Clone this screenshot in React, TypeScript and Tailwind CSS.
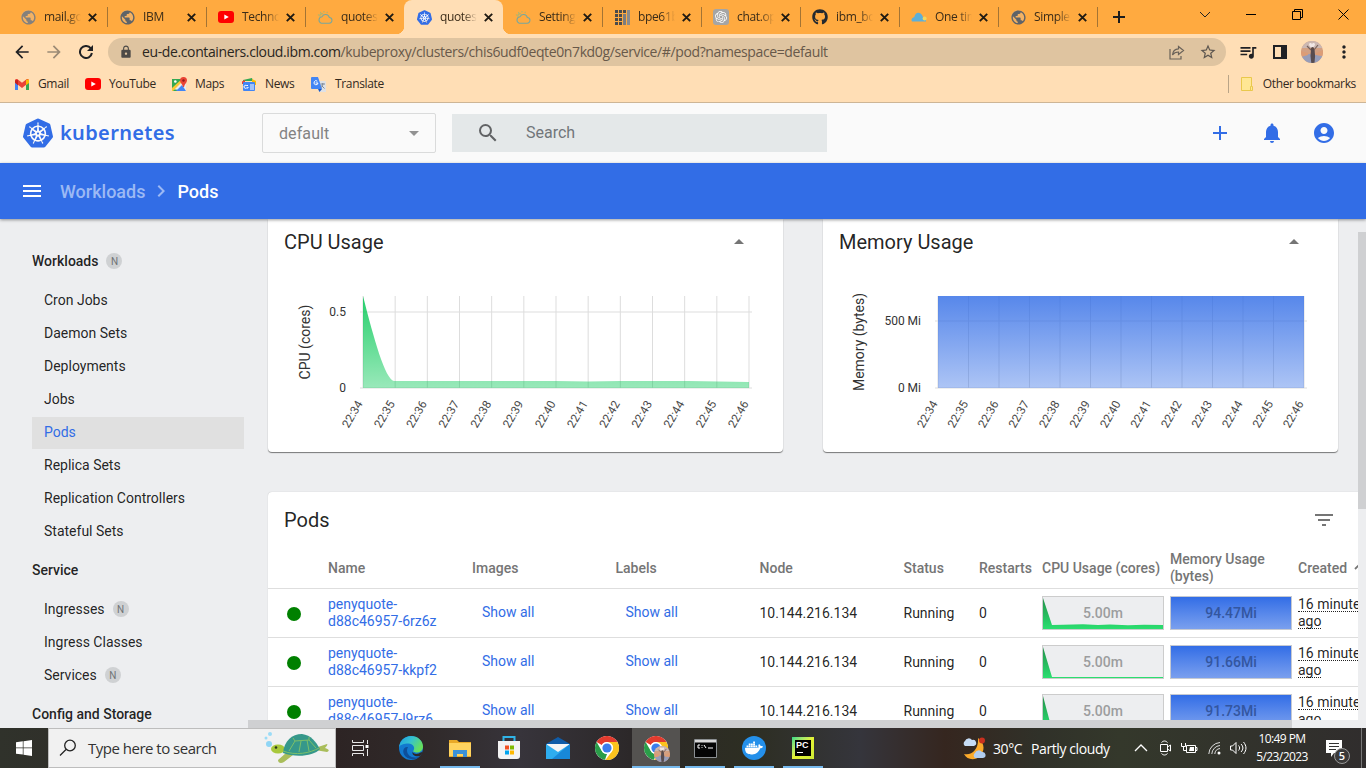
import React from 'react';
import {
  MdAccountCircle, MdAdd, MdArrowBack, MdArrowDropDown, MdArrowDropUp, MdArrowForward,
  MdChevronRight, MdFilterList, MdLock, MdMenu, MdMoreVert, MdNotifications,
  MdPublic, MdQueueMusic, MdSearch, MdStarBorder,
} from 'react-icons/md';
import { SiKubernetes, SiOpenai, SiDocker } from 'react-icons/si';
import { FaGithub } from 'react-icons/fa';

const times = ['22:34', '22:35', '22:36', '22:37', '22:38', '22:39', '22:40', '22:41', '22:42', '22:43', '22:44', '22:45', '22:46'];

function Globe({ faded }: { faded?: boolean }) {
  return (
    <span className="flex size-[14px] items-center justify-center rounded-full bg-[#f3b264]">
      <MdPublic className={`size-[17px] shrink-0 ${faded ? 'text-[#84807c]' : 'text-[#5f6368]'}`} />
    </span>
  );
}

function YouTube() {
  return (
    <svg width="16" height="12" viewBox="0 0 16 12">
      <rect width="16" height="12" rx="3" fill="#f00" />
      <path d="M6.3 3.4v5.2L10.8 6z" fill="#fff" />
    </svg>
  );
}

function Cloud() {
  return (
    <svg width="17" height="15" viewBox="0 0 17 15" fill="none" strokeWidth="1.100">
      <path d="M4.500 13.500h8.200a3 3 0 0 0 .4-6 4.200 4.200 0 0 0-7.800-.8A3.500 3.500 0 0 0 4.500 13.500z" stroke="#78a79d" />
      <path d="M2.800 6.400a3.400 3.400 0 0 1 3.400-3M7.400.5v1.600M3.500 1.600l.8 1.300M1 4.400l1.200.7M11.200 1.500l-.8 1.200" stroke="#a9b572" />
    </svg>
  );
}

function Bars() {
  return (
    <svg width="15" height="15" viewBox="0 0 15 15">
      {[0, 4, 8, 12].map((y) => [0, 4].map((x) => <rect key={`${x}-${y}`} x={x} y={y} width="3" height="3" fill="#4b4b4b" />))}
      <rect x="8" y="0" width="3" height="3" fill="#4b4b4b" />
      <rect x="8" y="4" width="3" height="11" fill="#7d7d7d" />
      <rect x="12" y="0" width="3" height="15" fill="#8b8b8b" />
    </svg>
  );
}

function Kube() {
  return (
    <span className="relative flex size-[15px] items-center justify-center">
      <span className="absolute size-[10px] rounded-full bg-white" />
      <SiKubernetes className="relative size-[15px] text-[#326de6]" />
    </span>
  );
}

function ChatGpt() {
  return (
    <span className="flex size-4 items-center justify-center rounded-[3px] bg-[#a5a5a5]">
      <SiOpenai className="size-3 text-white" />
    </span>
  );
}

function CloudMark() {
  return (
    <svg width="16" height="10" viewBox="0 0 16 10">
      <path d="M1 9.500C-.2 7.500 1 5.500 3.200 5.200 4 1.800 6 .5 7.600.8 10 1 11.300 3 11.800 4.800L15 7v2.500z" fill="#5eafd9" />
      <circle cx="13.600" cy="6.500" r="2" fill="#f2d65c" />
    </svg>
  );
}

const tabs = [
  { title: 'mail.go', icon: <Globe faded /> },
  { title: 'IBM', icon: <Globe /> },
  { title: 'Techno', icon: <YouTube /> },
  { title: 'quotes', icon: <Cloud /> },
  { title: 'quotes', icon: <Kube />, active: true },
  { title: 'Setting', icon: <Cloud /> },
  { title: 'bpe61b', icon: <Bars /> },
  { title: 'chat.op', icon: <ChatGpt /> },
  { title: 'ibm_bo', icon: <FaGithub className="size-4 text-[#24292f]" /> },
  { title: 'One tim', icon: <CloudMark /> },
  { title: 'Simple', icon: <Globe /> },
];

function TabStrip() {
  return (
    <div className="flex h-[34px] bg-[#ffaa40] pl-2">
      {tabs.map((t, i) => (
        <div
          key={i}
          className={`relative flex w-[99px] shrink-0 items-center pl-3 ${t.active ? 'rounded-t-lg bg-[#ffdeb5]' : ''}`}
        >
          {t.active && (
            <>
              <span className="absolute bottom-0 -left-2 size-2 bg-[radial-gradient(circle_at_0_0,#ffaa40_8px,#ffdeb5_8.5px)]" />
              <span className="absolute bottom-0 -right-2 size-2 bg-[radial-gradient(circle_at_100%_0,#ffaa40_8px,#ffdeb5_8.5px)]" />
            </>
          )}
          <span className="flex w-4 justify-center">{t.icon}</span>
          <span className="ml-2 w-[39px] overflow-hidden whitespace-nowrap text-[12px] tracking-[-0.35px] text-[#3b2c18] [mask-image:linear-gradient(to_right,#000_60%,transparent_95%)]">
            {t.title}
          </span>
          <svg className="ml-[5px]" width="9" height="9" viewBox="0 0 9 9" stroke="#1f1a12" strokeWidth="1.900"><path d="M.8.8l7.400 7.400M8.200.8L.8 8.200" /></svg>
          {!t.active && i !== 3 && <span className="absolute top-[7px] -right-px h-5 w-px bg-[#a37434]" />}
        </div>
      ))}
      <div className="flex w-[46px] items-center justify-center pr-[2px]">
        <svg width="12" height="12" viewBox="0 0 12 12" stroke="#1d1d1d" strokeWidth="2"><path d="M6 0v12M0 6h12" /></svg>
      </div>
      <div className="ml-auto flex">
        <div className="flex w-[46px] justify-center pt-[11px]"><svg width="12" height="7" viewBox="0 0 12 7" fill="none" stroke="#222"><path d="M1 1l5 5 5-5" /></svg></div>
        <div className="flex w-[46px] justify-center pt-[14px]"><span className="h-px w-[10px] bg-black" /></div>
        <div className="flex w-[46px] justify-center pt-[9px]"><svg width="11" height="11" viewBox="0 0 11 11" fill="none" stroke="#000"><path d="M.5 2.500h8v8h-8zM2.500 2.500v-2h8v8h-2" /></svg></div>
        <div className="flex w-[46px] justify-center pt-[9px]"><svg width="11" height="11" viewBox="0 0 11 11" fill="none" stroke="#000"><path d="M.5.5l10 10M10.500.5l-10 10" /></svg></div>
      </div>
    </div>
  );
}

function Avatar({ small }: { small?: boolean }) {
  return (
    <svg width={small ? 16 : 22} height={small ? 16 : 22} viewBox="0 0 22 22">
      <clipPath id={small ? 'avs' : 'avl'}><circle cx="11" cy="11" r="11" /></clipPath>
      <g clipPath={small ? 'url(#avs)' : 'url(#avl)'}>
        <rect width="22" height="22" fill="#d2a083" />
        <path d="M0 0h22v7H0z" fill="#cbb7b1" />
        <path d="M0 15l8-2 14 2v7H0z" fill="#979db9" />
        <path d="M0 10l7 2v2l-7 2zM22 9l-7 3v2l7 1z" fill="#dc9c76" />
        <path d="M10 8h3.500l.6 7-.6 7h-3.200L9.500 15z" fill="#574c50" />
        <path d="M10 9L6 5M13 9l4-5" stroke="#75615c" strokeWidth="1.200" />
        <path d="M8 3.500c0-2 3-2 3 0 0-2 3-2 3 0 0 2-3 3-3 4 0-1-3-2-3-4z" fill="#f0e6e4" />
        <circle cx="11.500" cy="7.500" r="1.500" fill="#5c4a45" />
      </g>
    </svg>
  );
}

function Toolbar() {
  return (
    <div className="flex h-[36px] items-center bg-[#ffdeb5]">
      <div className="flex w-[108px] items-center gap-3 pl-3 text-[#202124]">
        <MdArrowBack className="size-5" />
        <MdArrowForward className="size-5 text-[#9b8a75]" />
        <svg className="ml-[3px]" width="14" height="14" viewBox="0 0 14 14" fill="none" stroke="#202124" strokeWidth="2">
          <path d="M11.800 3.400A6 6 0 1 0 12.900 8" /><path d="M14 0v6H8z" fill="#202124" stroke="none" />
        </svg>
      </div>
      <div className="flex h-7 w-[1118px] items-center rounded-full bg-[#dfc4a0] pl-[11px] pr-[9px]">
        <MdLock className="size-[14px] text-[#4d4a47]" />
        <span className="ml-[9px] whitespace-nowrap pb-px text-[14px] tracking-[-0.38px] text-[#68594a]">
          <span className="text-[#2a2620]">eu-de.containers.cloud.ibm.com</span>
          /kubeproxy/clusters/chis6udf0eqte0n7kd0g/service/#/pod?namespace=default
        </span>
        <svg className="ml-auto" width="16" height="15" viewBox="0 0 16 15" fill="none" stroke="#6a6259" strokeWidth="1.200">
          <path d="M1 4v10h11v-3" />
          <path d="M9.500 1.500l5 4-5 4V7C6.500 7 4.800 8 3.500 10c.3-3.500 2.500-6 6-6.200z" />
        </svg>
        <MdStarBorder className="ml-[14px] size-[18px] text-[#5d564f]" />
      </div>
      <MdQueueMusic className="ml-3 size-[20px] text-[#202124]" />
      <svg className="ml-[15px]" width="14" height="14" viewBox="0 0 14 14"><path d="M0 0h14v14H0zM2 2v10h6V2z" fill="#202124" fillRule="evenodd" /></svg>
      <span className="ml-[14px]"><Avatar /></span>
      <MdMoreVert className="ml-[11px] size-5 text-[#202124]" />
    </div>
  );
}

function Bookmarks() {
  const item = 'flex items-center text-[12px] tracking-[-0.35px] text-[#33291d] whitespace-nowrap';
  return (
    <div className="flex h-[33px] items-center border-b border-[#cdb596] bg-[#ffdeb5] pb-[4px]">
      <div className={`${item} ml-[15px] w-[70px] gap-[9px]`}>
        <svg width="14" height="11" viewBox="0 0 14 11">
          <path d="M0 1.500V11h3V5z" fill="#4285f4" /><path d="M14 1.500V11h-3V5z" fill="#34a853" />
          <path d="M0 1.500v2L7 9l7-5.500v-2C14 0 12.300-.4 11.200.5L7 3.800 2.800.5C1.700-.4 0 0 0 1.500z" fill="#ea4335" />
          <path d="M11 .7L14 .4V4l-3 2.300z" fill="#fbbc04" /><path d="M0 1.400v2.400L3 6.300V.7z" fill="#c5221f" />
        </svg>Gmail
      </div>
      <div className={`${item} w-[87px] gap-2`}><YouTube />YouTube</div>
      <div className={`${item} w-[70px] gap-2`}>
        <svg width="15" height="15" viewBox="0 0 15 15">
          <path d="M0 2h13v12H0z" fill="#34a853" /><path d="M0 12L9 4h5v10z" fill="#e8eaed" />
          <path d="M4 14l6-6 4 6z" fill="#4285f4" /><path d="M0 11L11 1l1.500 1.500L1 14H0z" fill="#fbc834" /><circle cx="3.300" cy="4.500" r="1.300" fill="#fff" />
          <path d="M11.500 0a3.500 3.500 0 0 1 3.500 3.500c0 2-2.500 3.500-3 6.500h-1C10.500 7 8 5.500 8 3.500A3.500 3.500 0 0 1 11.500 0z" fill="#ea4335" /><circle cx="11.500" cy="3.500" r="1.200" fill="#8c1d18" />
        </svg>Maps
      </div>
      <div className={`${item} w-[69px] gap-[9px]`}>
        <svg width="14" height="13" viewBox="0 0 14 13">
          <path d="M1 2l9-2 1 3H1z" fill="#34a853" /><path d="M0 3.500L3 2v4H0z" fill="#ea4335" /><path d="M10 1l4 2v4h-4z" fill="#fbbc04" />
          <rect x="1" y="4" width="12" height="9" rx="1" fill="#4285f4" /><path d="M6 7.500H4.200a1.500 1.500 0 1 0 .2 2.500H6V9M8 7h4M8 9h4M8 11h4" fill="none" stroke="#fff" />
        </svg>News
      </div>
      <div className={`${item} gap-[9px]`}>
        <svg width="15" height="15" viewBox="0 0 15 15">
          <path d="M5 4h9a1 1 0 0 1 1 1v10H8z" fill="#dfe1e5" /><path d="M1 0h6l4 12H1a1 1 0 0 1-1-1V1a1 1 0 0 1 1-1z" fill="#4285f4" />
          <path d="M7 12h4l-2.500 3z" fill="#1a57c2" /><path d="M7 6H4.600M6.300 4.200A2 2 0 1 0 7 6" fill="none" stroke="#fff" />
          <path d="M9.500 7h4.500M11.800 6v1c0 2-1 3-2 3.800M10.500 8.500l3 3" fill="none" stroke="#75808e" strokeWidth=".9" />
        </svg>Translate
      </div>
      <div className={`${item} ml-auto mr-[10px] border-l border-[#b9a487] pl-3`}>
        <svg className="mr-[10px]" width="12" height="14" viewBox="0 0 12 14" fill="#ffe794" stroke="#e9c84c"><path d="M.5.5h10v9h1v4h-11zM9.500 13.500v-4h1" /></svg>
        Other bookmarks
      </div>
    </div>
  );
}

function KubeHeader() {
  return (
    <>
      <div className="flex h-[60px] items-center bg-[#fafafa]">
        <div className="flex w-[262px] items-center pl-[23px]">
          <SiKubernetes className="size-[30px] text-[#326de6]" />
          <span className="ml-[7px] pb-px font-['Noto_Sans'] text-[20px] font-semibold tracking-[0.35px] text-[#326de6]">kubernetes</span>
        </div>
        <div className="flex h-10 w-[174px] items-center justify-between rounded-[2px] border border-[#dadbdb] pl-4 pr-[9px] text-[16px] text-[#838383]">
          <span className="pt-px tracking-[0.1px]">default</span>
          <MdArrowDropDown className="size-6 text-[#929292]" />
        </div>
        <div className="ml-4 flex h-[38px] w-[375px] items-center bg-[#e4e8e9] pl-6 text-[16px] text-[#71767a]">
          <MdSearch className="size-6 text-[#616365]" />
          <span className="ml-[26px]">Search</span>
        </div>
        <div className="ml-auto flex gap-7 pr-[30px] text-[#326de6]">
          <MdAdd className="size-6" /><MdNotifications className="size-6" /><MdAccountCircle className="size-6" />
        </div>
      </div>
      <div className="relative z-10 flex h-14 items-center bg-[#326de6] pl-5 text-[18px] font-medium text-white shadow-[0_1px_3px_rgba(0,0,0,0.4)]">
        <MdMenu className="size-6" />
        <span className="ml-4 text-[#9cb9f4]">Workloads</span>
        <MdChevronRight className="ml-1 size-6 text-[#9cb9f4]" />
        <span className="ml-1">Pods</span>
      </div>
    </>
  );
}

function Badge() {
  return <span className="ml-2 flex size-4 items-center justify-center rounded-full bg-[#cfd1d3] text-[10px] font-normal text-[#707476]">N</span>;
}

function NavItem({ label, badge, active }: { label: string; badge?: boolean; active?: boolean }) {
  return (
    <div className={`mb-px flex h-8 w-[212px] items-center pb-[2px] pl-3 ${active ? 'bg-[#e0e0e0] text-[#326de6]' : ''}`}>
      {label}{badge && <Badge />}
    </div>
  );
}

function Sidebar() {
  const head = 'flex items-center font-medium';
  return (
    <nav className="h-[509px] w-[248px] shrink-0 overflow-hidden pl-8 text-[14px] text-[#000000de]">
      <div className={`${head} mt-[33px] h-[18px]`}>Workloads<Badge /></div>
      <div className="mt-[15px]">
        {['Cron Jobs', 'Daemon Sets', 'Deployments', 'Jobs', 'Pods', 'Replica Sets', 'Replication Controllers', 'Stateful Sets'].map((l) => (
          <NavItem key={l} label={l} active={l === 'Pods'} />
        ))}
      </div>
      <div className={`${head} mt-[13px] h-[18px]`}>Service</div>
      <div className="mt-[15px]">
        <NavItem label="Ingresses" badge /><NavItem label="Ingress Classes" /><NavItem label="Services" badge />
      </div>
      <div className={`${head} mt-[13px] h-[18px]`}>Config and Storage</div>
    </nav>
  );
}

type ChartProps = { id: string; title: string; axis: string; axisX: number; x0: number; x1: number; tickY: number; tick: string; zero: string; area: string; color: string; top: number; bottom: number };

function Chart(p: ChartProps) {
  const step = (p.x1 - p.x0) / 12;
  return (
    <section className="h-[233px] w-[515px] rounded-b bg-white shadow-[0_1px_1px_rgba(0,0,0,0.5)]">
      <div className="flex h-[46px] items-center justify-between pl-4 pr-8 text-[20px] text-[#000000de]">
        <h2>{p.title}</h2>
        <MdArrowDropUp className="size-6 text-[#757575]" />
      </div>
      <svg className="block" width="515" height="180" viewBox="0 46 515 180" fontFamily="Roboto, sans-serif">
        <defs>
          <linearGradient id={p.id} x1="0" y1="0" x2="0" y2="1">
            <stop offset="0" stopColor={p.color} stopOpacity={p.top} /><stop offset="1" stopColor={p.color} stopOpacity={p.bottom} />
          </linearGradient>
        </defs>
        <g stroke="#dddddd">
          {times.map((t, i) => <path key={t} d={`M${p.x0 + i * step} 77V169`} />)}
          <path d={`M${p.x0 - 3} ${p.tickY}H${p.x1 + 3}M${p.x0 - 3} 169H${p.x1 + 3}`} />
        </g>
        <path d={p.area} fill={`url(#${p.id})`} />
        <g fontSize="12" fill="#333" textAnchor="end">
          <text x={p.x0 - 17} y={p.tickY + 4}>{p.tick}</text>
          <text x={p.x0 - 17} y="172.500">{p.zero}</text>
          {times.map((t, i) => <text key={t} fill="#484848" fontSize="11.700" transform={`translate(${p.x0 + i * step} 184.500) rotate(-60)`}>{t}</text>)}
        </g>
        <text fontSize="14" fill="#333" textAnchor="middle" transform={`translate(${p.axisX} 123) rotate(-90)`}>{p.axis}</text>
      </svg>
    </section>
  );
}

const pods = [
  { name: '6rz6z', mem: '94.47Mi', spark: 'M0 32V1l9 27 11-.3 20-.5 15 .8 12-.5 18 .7 16-.5 20 .3V32z' },
  { name: 'kkpf2', mem: '91.66Mi', spark: 'M0 32V1l9 30h112v1z' },
  { name: 'l9rz6', mem: '91.73Mi', spark: 'M0 32V1l8 30h113v1z' },
];
const cols = 'grid grid-cols-[60px_144px_143.500px_144px_144px_75.500px_63px_128px_128px_120px]';

function PodTable() {
  const ago = 'block h-[15px] w-fit border-b border-dotted border-[#222] leading-[15px]';
  return (
    <section className="mt-10 w-[1130px] rounded bg-white text-[14px] text-[#000000de] shadow-[0_0_1px_rgba(0,0,0,0.25)]">
      <div className="flex h-[55px] items-center text-[20px]">
        <h2 className="w-[1044px] pl-4">Pods</h2>
        <MdFilterList className="size-6 text-[#757575]" />
      </div>
      <div className={`${cols} h-[42px] items-center border-b border-[#dedede] font-medium leading-[17px] text-[#757575]`}>
        <span /><span className="pt-[2px]">Name</span><span className="pt-[2px]">Images</span><span className="pt-[2px]">Labels</span><span className="pt-[2px]">Node</span><span className="pt-[2px]">Status</span><span className="pt-[2px]">Restarts</span>
        <span className="whitespace-nowrap pt-[2px]">CPU Usage (cores)</span><span>Memory Usage (bytes)</span>
        <span className="flex items-center pt-[2px]">Created
          <svg className="ml-[7px] mb-[5px]" width="10" height="7" viewBox="0 0 10 7" fill="none" stroke="#757575" strokeWidth="1.800"><path d="M1 6l4-4 4 4" /></svg>
        </span>
      </div>
      {pods.map((p, i) => (
        <div key={p.name} className={`${cols} h-[49px] items-center border-b border-[#dedede] leading-[17px]`}>
          <span className="ml-[19px] mt-[2px] size-[14px] rounded-full bg-[#008000]" />
          <span className="text-[#326de6]">penyquote-<br />d88c46957-{p.name}</span>
          <span className="pb-[2px] pl-[10px] text-[#326de6]">Show all</span>
          <span className="pb-[2px] pl-[10px] text-[#326de6]">Show all</span>
          <span className="pt-px">10.144.216.134</span><span className="pt-px">Running</span><span className="pt-px">0</span>
          <span className="relative flex h-[34px] w-[122px] items-center justify-center border border-[#cccccc] bg-[#edeef0] font-medium text-[#9c9d9e]">
            <svg className="absolute inset-0" width="120" height="32" viewBox="0 0 120 32">
              <defs><linearGradient id={`sp${i}`} x1="0" y1="0" x2="0" y2="1"><stop offset="0" stopColor="#238f49" /><stop offset="1" stopColor="#2bdf70" /></linearGradient></defs>
              <path d={p.spark} fill={`url(#sp${i})`} />
            </svg>
            <span className="relative">5.00m</span>
          </span>
          <span className="flex h-[34px] w-[122px] items-center justify-center border border-[#c5c9d2] bg-linear-to-b from-[#326de6] to-[#7a9fee] font-medium text-[#33569f]">{p.mem}</span>
          <span className="whitespace-nowrap">
            <span className={`${ago} mb-[2px]`}>16 minutes</span><span className={ago}>ago</span>
          </span>
        </div>
      ))}
    </section>
  );
}

function ChromeLogo() {
  return (
    <svg width="24" height="24" viewBox="0 0 24 24">
      <circle cx="12" cy="12" r="12" fill="#fff" />
      <path d="M1.600 6A12 12 0 0 1 22.400 6H12a6 6 0 0 0-5.200 3z" fill="#e33b2e" /><path d="M1.600 6L6.800 15A6 6 0 0 0 12 18l-2 5.800A12 12 0 0 1 1.600 6z" fill="#2a9d49" />
      <path d="M22.400 6A12 12 0 0 1 10.400 23.900L17.200 15A6 6 0 0 0 17 8.500L12 6z" fill="#fcc31e" />
      <circle cx="12" cy="12" r="6" fill="#fff" /><circle cx="12" cy="12" r="4.600" fill="#3b7ded" />
    </svg>
  );
}

function Task({ children, open, active }: { children: React.ReactNode; open?: boolean; active?: boolean }) {
  return (
    <div className={`relative mr-px flex h-10 w-12 shrink-0 items-center justify-center ${active ? 'bg-[#545250]' : ''}`}>
      {children}
      {(open || active) && <span className={`absolute bottom-0 h-[2px] bg-[#76b9ed] ${active ? 'w-12' : 'w-10'}`} />}
    </div>
  );
}

function Turtle() {
  return (
    <svg width="66" height="34" viewBox="0 0 66 34">
      <circle cx="6" cy="3" r="2" fill="#9bdcf7" /><circle cx="2" cy="7" r="1.500" fill="#9bdcf7" /><circle cx="5" cy="13" r="3" fill="#8fd5f5" />
      <path d="M22 22l-8 7c0 3 3 4 6 2l9-7zM54 16l9-3c1 0 0 2-2 4 4 1 5 3 2 4l-12-2z" fill="#a9bd5a" />
      <ellipse cx="14" cy="18" rx="7" ry="4.500" fill="#a8c83c" /><circle cx="12" cy="16.500" r="1.300" fill="#29361c" />
      <path d="M19 22C20 10 28 3 38 3c9 1 14 8 18 15-6 7-24 9-37 4z" fill="#36988a" />
      <path d="M19 20c13 5 27 2 36-3M25 20l6-10 14-1 7 8M31 10l-2-3M45 9l0-3M35 21l2-11M45 20l-2-11" fill="none" stroke="#7cc069" />
    </svg>
  );
}

function Taskbar() {
  return (
    <footer className="flex h-10 bg-[linear-gradient(to_right,#30322b_0,#2d2424_336px,#302a2a_430px,#37343b_520px,#2c2829_630px,#2d2e22_750px,#35353c_860px,#35261f_945px,#303129_1040px,#34382b_1120px,#302d2d_1366px)] text-white">
      <div className="flex w-12 items-center justify-center">
        <svg width="16" height="16" viewBox="0 0 16 16" fill="#fff"><path d="M0 2.300l6.800-1v6.300H0zM7.500 1.200L16 0v7.600H7.500zM0 8.300h6.800v6.300L0 13.700zM7.500 8.300H16V16l-8.500-1.200z" /></svg>
      </div>
      <div className="flex w-[288px] items-center border border-[#bdbdbd] bg-[#f1f1f1] pl-[10px] text-[#333]">
        <svg width="18" height="18" viewBox="0 0 18 18" fill="none" stroke="#222" strokeWidth="1.300"><circle cx="11" cy="6.500" r="5.300" /><path d="M7 10.500L1 16.500" /></svg>
        <span className="ml-[11px] w-[176px] whitespace-nowrap text-[15px] tracking-[-0.5px]">Type here to search</span>
        <Turtle />
      </div>
      <div className="mr-[3px] flex w-12 items-center justify-center">
        <svg width="17" height="16" viewBox="0 0 17 16" fill="none" stroke="#e8e8e8"><path d="M.5 0v2.500h11V0M.5 5.500h11v5H.5zM.5 16v-2.500h11V16M15.500 0v4M15.500 9v7" /><path d="M13.500 5h3v3h-3z" fill="#fff" stroke="none" /></svg>
      </div>
      <Task>
        <svg width="24" height="24" viewBox="0 0 24 24">
          <defs><linearGradient id="eg" x1="0" y1="0" x2="1" y2=".5"><stop offset="0" stopColor="#1b9de2" /><stop offset=".5" stopColor="#35c1d0" /><stop offset="1" stopColor="#66df5c" /></linearGradient></defs>
          <circle cx="12" cy="12" r="12" fill="#1279cf" /><path d="M0 11.500C.6 5 5.500 0 12 0c7 0 12 5 12 10.500 0 4-3 6-6.500 6-2 0-4-.8-3-2 2-3-.5-7-5-7-4.500 0-8.500 1-9.500 4z" fill="url(#eg)" />
          <path d="M9 11c-3 5 1 11 8 10.500 2 0 4-1 5-2-4 5-14 5-17-1-2-4 0-8 4-7.500z" fill="#0d4f9b" /><path d="M13.500 16c1.500 2.500 5.500 2.500 9 0l1 1-2.500 3c-5 1-8-1-7.500-4z" fill="#2d2829" />
        </svg>
      </Task>
      <Task open>
        <svg width="22" height="18" viewBox="0 0 22 18"><path d="M0 1h8l2 2h12v15H0z" fill="#e9a928" /><path d="M0 4h22v13H0z" fill="#ffd35f" /><path d="M4 18v-7h14v7h-4v-3H8v3z" fill="#3b91d9" /></svg>
      </Task>
      <Task>
        <svg width="24" height="24" viewBox="0 0 24 24"><path d="M6.500 5V1h11v4" fill="none" stroke="#30b4e8" strokeWidth="2" /><path d="M1 5h22v15a3 3 0 0 1-3 3H4a3 3 0 0 1-3-3z" fill="#f3f3f3" /><path d="M8 9.500h4v4H8z" fill="#f25022" /><path d="M13 9.500h4v4h-4z" fill="#7fba00" /><path d="M8 14.500h4v4H8z" fill="#00a4ef" /><path d="M13 14.500h4v4h-4z" fill="#ffb900" /></svg>
      </Task>
      <Task>
        <svg width="24" height="22" viewBox="0 0 24 22"><path d="M0 7l12-7 12 7v3H0z" fill="#105ca8" /><path d="M1 7h22v9H1z" fill="#f5f5f5" /><path d="M0 7l12 8 12-8v15H0z" fill="#2eadef" /><path d="M24 7L6 22h18z" fill="#1888d8" /></svg>
      </Task>
      <Task><ChromeLogo /></Task>
      <Task active><span className="relative"><ChromeLogo /><span className="absolute -bottom-[2px] -right-[2px]"><Avatar small /></span></span></Task>
      <Task open>
        <svg width="23" height="19" viewBox="0 0 23 19"><path d="M.5.5h22v18H.5z" fill="#050505" stroke="#8b8f92" /><path d="M1 1h21v2.500H1z" fill="#d8d8d8" /><path d="M6 6H4v3h2M8 6v.8M8 8.200V9M10 6l2 3M14 9h5" fill="none" stroke="#fff" /></svg>
      </Task>
      <Task open><span className="flex size-6 items-center justify-center rounded-full bg-[#2490ea]"><SiDocker className="size-[18px]" /></span></Task>
      <Task open>
        <span className="flex size-[22px] items-center justify-center bg-linear-to-br from-[#25d989] via-[#e4f233] to-[#cdea36]">
          <span className="flex size-4 flex-col bg-black pl-px font-['Liberation_Sans'] text-[9px] font-bold leading-[10px]">PC<span className="ml-px mt-[2px] h-px w-[6px] bg-white" /></span>
        </span>
      </Task>
      <div className="ml-auto flex items-center text-[14px]">
        <svg width="25" height="23" viewBox="0 0 25 23"><path d="M17 1c7 5 7 13 2 18-5 5-13 4-16-2 8 2 15-5 14-16z" fill="#fbaa2b" /><path d="M4 9a3 3 0 0 1 0-5 4 4 0 0 1 7-1 3 3 0 0 1 2 6z" fill="#c6dcf5" /><path d="M14 21a3 3 0 0 1 0-5 4 4 0 0 1 7-1 3 3 0 0 1 1 6z" fill="#b1cdf0" /><circle cx="21" cy="3.500" r="3" fill="#c9301f" /></svg>
        <span className="ml-[7px] w-[38px] whitespace-nowrap tracking-[-0.4px]">30°C</span>
        <span className="w-[103px] whitespace-nowrap tracking-[-0.4px]">Partly cloudy</span>
        <svg width="14" height="8" viewBox="0 0 14 8" fill="none" stroke="#fff" strokeWidth="1.300"><path d="M1 7l6-6 6 6" /></svg>
        <svg className="ml-[11px]" width="13" height="16" viewBox="0 0 13 16" fill="none" stroke="#fff"><path d="M1.500 4.500h7v7h-7zM8.500 7l3-2v6l-3-2M2.500 2.500c2-2 4-2 6 0M2.500 13.500c2 2 4 2 6 0" /></svg>
        <svg className="ml-[9px]" width="17" height="13" viewBox="0 0 17 13" fill="none" stroke="#fff"><path d="M5.500 3.500h9v7h-9zM14.500 5.500h1.500v3h-1.500M.5 1v3.500h4V1M2.500 4.500v4h3" /><path d="M9 5h4v4H8z" fill="#fff" stroke="none" /></svg>
        <svg className="ml-[10px]" width="13" height="14" viewBox="0 0 13 14" fill="none" stroke="#ddd"><path d="M.8 13A12 12 0 0 1 12 1.500M3.800 13A9 9 0 0 1 12 4.500M6.800 13A6 6 0 0 1 12 7.500" /><circle cx="11" cy="12" r="1.500" fill="#fff" stroke="none" /></svg>
        <svg className="ml-[9px]" width="17" height="14" viewBox="0 0 17 14" fill="none" stroke="#fff"><path d="M.5 5h2L6 1.500v11L2.500 9h-2zM8.500 4.500c1.500 1.500 1.500 3.500 0 5M11 3c2.500 2.500 2.500 5.500 0 8M13.500 1c3.300 4 3.300 8 0 12" /></svg>
        <div className="ml-[8px] w-[54px] text-center text-[12px] leading-[18px] tracking-[-0.6px] whitespace-nowrap"><div>10:49 PM</div><div>5/23/2023</div></div>
        <div className="relative ml-[17px] mt-2 h-6 w-[35px]">
          <svg className="absolute left-0 top-0" width="16" height="17" viewBox="0 0 16 17"><path d="M0 0h16v13H8l-3 4v-4H0z" fill="#fff" /><path d="M3 3.500h10M3 6.500h10M3 9.500h7" stroke="#333" /></svg>
          <span className="absolute left-[8px] top-[8px] flex size-4 items-center justify-center rounded-full border border-[#999] bg-[#3b3a39] text-[11px] font-semibold">5</span>
        </div>
        <span className="mr-[4px] h-10 w-px bg-[#777]" />
      </div>
    </footer>
  );
}

export default function App() {
  return (
    <div className="flex h-[768px] w-[1366px] flex-col overflow-hidden font-['Open_Sans',sans-serif]">
      <TabStrip />
      <Toolbar />
      <Bookmarks />
      <main className="flex h-[625px] shrink-0 flex-col font-['Roboto',sans-serif]">
        <KubeHeader />
        <div className="flex h-[509px] bg-[#edeef0]">
          <Sidebar />
          <div className="w-[1110px] overflow-hidden">
            <div className="h-[501px] overflow-hidden pl-5">
              <div className="flex gap-10">
                <Chart id="cpu" title="CPU Usage" axis="CPU (cores)" axisX={42} x0={95} x1={481} tickY={93} tick="0.5" zero="0"
                  area="M95 77C106 120 117 160 126 162L288 162 320 162.500 352 162 420 162 481 163V169H95Z" color="#00c752" top={0.85} bottom={0.4} />
                <Chart id="mem" title="Memory Usage" axis="Memory (bytes)" axisX={41} x0={115} x1={481} tickY={102} tick="500 Mi" zero="0 Mi"
                  area="M115 77H481V169H115Z" color="#326de6" top={0.82} bottom={0.4} />
              </div>
              <PodTable />
            </div>
            <div className="h-2 w-[1044px] bg-[#cfd0d2]" />
          </div>
          <div className="w-2 pt-[13px]"><div className="h-[277px] bg-[#cfd0d2]" /></div>
        </div>
      </main>
      <Taskbar />
    </div>
  );
}
